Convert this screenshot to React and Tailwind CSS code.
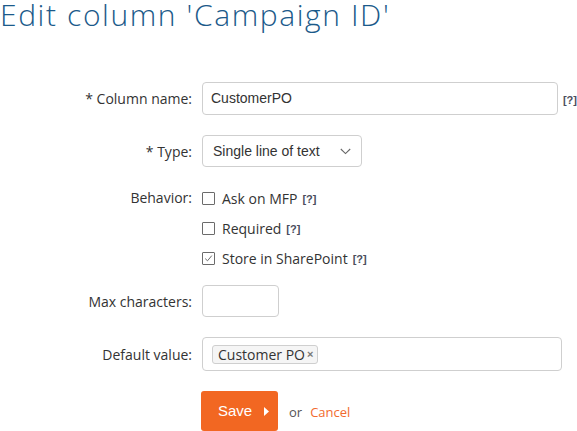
import React from "react";

const label = "w-[192px] shrink-0 text-right text-[14px] text-[#333] [font-family:'Open_Sans',sans-serif]";
const help = "text-[11px] font-bold text-[#4a4d5c] [font-family:'Liberation_Sans',Arial,sans-serif]";

function Check({ checked, text }) {
  return (
    <div className="flex h-5 items-center">
      <span className="relative flex h-[13px] w-[13px] items-center justify-center rounded-[1px] border border-[#6b6b6b] bg-white">
        {checked && (
          <svg width="9" height="9" viewBox="0 0 9 9" className="absolute">
            <path d="M1.2 4.6 L3.5 6.8 L7.8 1.6" fill="none" stroke="#6b6b6b" strokeWidth="1" />
          </svg>
        )}
      </span>
      <span className="ml-[7px] text-[14px] text-[#333] [font-family:'Open_Sans',sans-serif]">{text}</span>
      <span className={"ml-[5px] mt-[2px] " + help}>[?]</span>
    </div>
  );
}

export default function App() {
  return (
    <div className="h-[431px] w-[577px] overflow-hidden bg-white">
      <h1 className="m-0 whitespace-nowrap text-[30px] font-light leading-none tracking-[1.6px] text-[#1b5a8a] [font-family:'Open_Sans',sans-serif]">
        Edit column 'Campaign ID'
      </h1>

      <div className="mt-[52px] flex items-center">
        <div className={label}>* Column name:</div>
        <div className="ml-[10px] flex h-[33px] w-[356px] items-center rounded-[4px] border border-[#cfcfcf] px-[8px] text-[14px] text-[#333] [font-family:'Liberation_Sans',Arial,sans-serif]">
          CustomerPO
        </div>
        <span className={"ml-[5px] mt-[4px] " + help}>[?]</span>
      </div>

      <div className="mt-[20px] flex items-center">
        <div className={label}>* Type:</div>
        <div className="ml-[10px] flex h-[32px] w-[160px] items-center justify-between rounded-[4px] border border-[#cfcfcf] pl-[10px] pr-[10px] text-[14px] text-[#333] [font-family:'Liberation_Sans',Arial,sans-serif]">
          <span>Single line of text</span>
          <svg width="11" height="7" viewBox="0 0 11 7">
            <path d="M0.8 1 L5.5 5.6 L10.2 1" fill="none" stroke="#666" strokeWidth="1.1" />
          </svg>
        </div>
      </div>

      <div className="mt-[21px] flex items-start">
        <div className={label + " leading-5"}>Behavior:</div>
        <div className="ml-[10px] flex flex-col gap-[10px]">
          <Check text="Ask on MFP" />
          <Check text="Required" />
          <Check checked text="Store in SharePoint" />
        </div>
      </div>

      <div className="mt-[17px] flex items-center">
        <div className={label}>Max characters:</div>
        <div className="ml-[10px] h-[32px] w-[77px] rounded-[4px] border border-[#cfcfcf]" />
      </div>

      <div className="mt-[20px] flex items-center">
        <div className={label}>Default value:</div>
        <div className="ml-[10px] flex h-[34px] w-[360px] items-center rounded-[4px] border border-[#cfcfcf] pl-[9px]">
          <span className="flex h-[19px] items-center rounded-[3px] border border-[#cfcfcf] bg-[#f5f5f5] pl-[5px] pr-[4px] text-[14px] text-[#333] [font-family:'Open_Sans',sans-serif]">
            Customer PO
            <span className="ml-[2px] text-[11px] font-bold text-[#777] [font-family:'Liberation_Sans',Arial,sans-serif]">×</span>
          </span>
        </div>
      </div>

      <div className="mt-[20px] flex items-center">
        <div className="w-[192px] shrink-0" />
        <button className="ml-[9px] flex h-[40px] w-[77px] items-center rounded-[3px] bg-[#f26722] pl-[17px] text-[15px] text-white [font-family:'Liberation_Sans',Arial,sans-serif]">
          <span>Save</span>
          <svg width="5" height="9" viewBox="0 0 5 9" className="ml-[12px]">
            <path d="M0 0 L5 4.5 L0 9 Z" fill="#fff" />
          </svg>
        </button>
        <span className="ml-[11px] mt-[4px] text-[13px] text-[#555] [font-family:'Open_Sans',sans-serif]">or</span>
        <span className="ml-[8px] mt-[4px] text-[13px] text-[#f26a2e] [font-family:'Open_Sans',sans-serif]">Cancel</span>
      </div>
    </div>
  );
}
